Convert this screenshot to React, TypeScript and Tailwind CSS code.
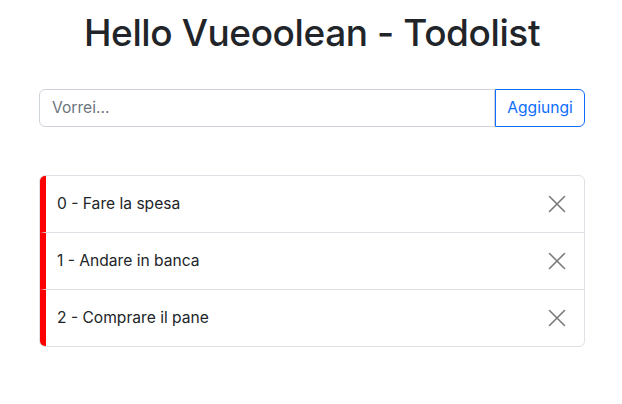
import { useState } from "react";

type Todo = {
	id: number;
	text: string;
};

const initialTodos: Todo[] = [
	{ id: 0, text: "Fare la spesa" },
	{ id: 1, text: "Andare in banca" },
	{ id: 2, text: "Comprare il pane" },
];

function CloseIcon() {
	return (
		<svg width="18" height="18" viewBox="0 0 18 18" fill="none" stroke="#7a7a7a" strokeWidth="1.6" strokeLinecap="round">
			<path d="M1.5 1.5l15 15M16.5 1.5l-15 15"/>
		</svg>
	);
}

export default function App() {
	const [todos, setTodos] = useState<Todo[]>(initialTodos);
	const [value, setValue] = useState("");

	return (
		<div className="min-h-screen bg-white pl-[39px] text-[#212529] font-['Inter',sans-serif]">
			<div className="w-[546px] pt-[9px]">
				<h1 className="text-center text-[37px] leading-[48px] font-medium tracking-[-0.4px]">
					Hello Vueoolean - Todolist
				</h1>

				<div className="mt-[32px] flex h-[38px]">
					<input
						value={value}
						onChange={(e) => setValue(e.target.value)}
						placeholder="Vorrei..."
						className="flex-1 rounded-l-[6px] border border-[#ced4da] px-3 text-[15.6px] text-[#212529] placeholder:text-[#6c757d] outline-none"
					/>
					<button
						className="w-[90px] rounded-r-[6px] border border-[#0d6efd] text-[15.6px] text-[#0d6efd]"
						onClick={() => {
							if (!value.trim()) return;
							setTodos([...todos, { id: todos.length, text: value }]);
							setValue("");
						}}
					>
						Aggiungi
					</button>
				</div>

				<ul className="mt-[48px] overflow-hidden rounded-[6px] border border-[#dee2e6]">
					{todos.map((todo, i) => (
						<li
							key={todo.id}
							className="flex h-[57px] items-center justify-between border-l-[6px] border-l-[#ff0000] pl-[11px] pr-[18px] text-[15.6px] border-b border-b-[#dee2e6] last:border-b-0 last:h-[56px]"
						>
							<span>{i} - {todo.text}</span>
							<button onClick={() => setTodos(todos.filter((t) => t.id !== todo.id))}>
								<CloseIcon/>
							</button>
						</li>
					))}
				</ul>
			</div>
		</div>
	);
}
